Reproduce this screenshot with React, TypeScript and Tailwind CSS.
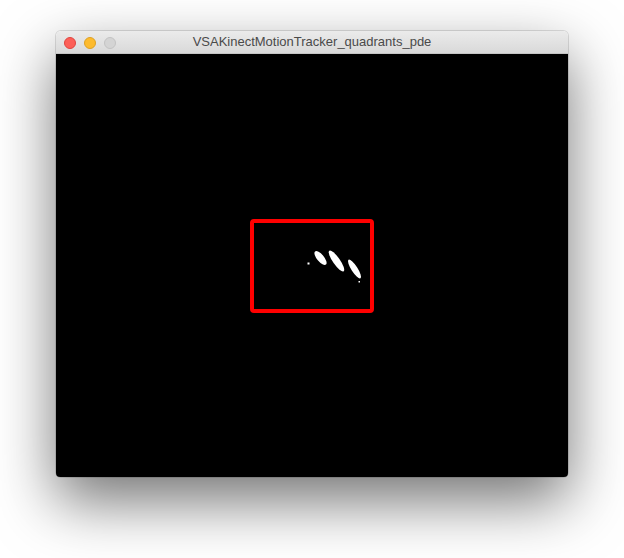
import React from "react";

export default function App() {
  return (
    <div className="w-[624px] h-[558px] bg-white pl-[56px] pt-[31px] overflow-hidden">
      <div className="w-[512px] rounded-[5px] shadow-[0_24px_60px_rgba(0,0,0,0.55),0_0_0_1px_rgba(0,0,0,0.12)]">
        <div className="relative h-[23px] flex items-center rounded-t-[5px] bg-gradient-to-b from-[#ebebeb] to-[#d9d9d9] border-b border-[#c4c4c4]">
          <div className="absolute left-[8px] top-[6px] flex gap-[8px]">
            <div className="w-[12px] h-[12px] rounded-full bg-[#fc5f57] border border-[#e0443e]" />
            <div className="w-[12px] h-[12px] rounded-full bg-[#fdbb2e] border border-[#dea123]" />
            <div className="w-[12px] h-[12px] rounded-full bg-[#d4d4d4] border border-[#c3c3c3]" />
          </div>
          <div className="flex-1 text-center text-[13px] leading-[22px] text-[#4a4a4a] font-['Liberation_Sans',Arial,sans-serif]">
            VSAKinectMotionTracker_quadrants_pde
          </div>
        </div>
        <div className="h-[423px] bg-black rounded-b-[4px] overflow-hidden">
          <svg width="512" height="423" viewBox="0 0 512 423">
            <rect x="196" y="167" width="120" height="90" rx="2" fill="none" stroke="#ff0000" strokeWidth="4" />
            <g fill="#ffffff">
              <rect x="251.5" y="208.5" width="2" height="2" />
              <ellipse cx="264.5" cy="204" rx="8.5" ry="3.5" transform="rotate(50 264.5 204)" />
              <ellipse cx="280.5" cy="207" rx="12.5" ry="3.5" transform="rotate(55 280.5 207)" />
              <ellipse cx="298.5" cy="215" rx="11" ry="3" transform="rotate(57 298.5 215)" />
              <rect x="302.5" y="227" width="1.5" height="1.5" />
            </g>
          </svg>
        </div>
      </div>
    </div>
  );
}
